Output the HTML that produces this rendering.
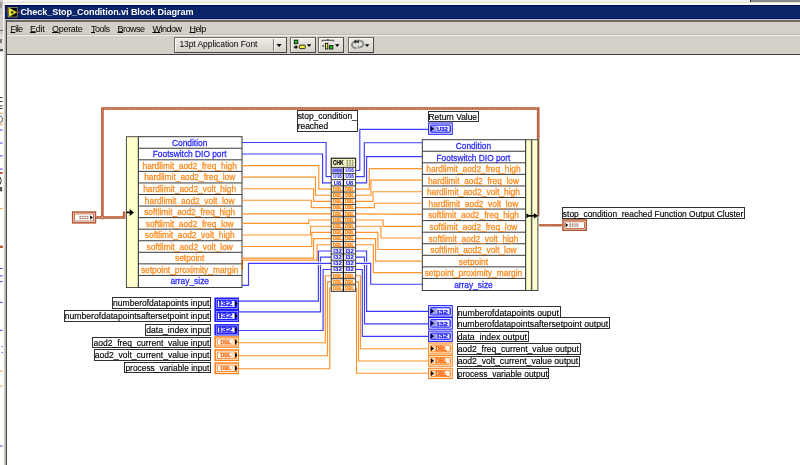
<!DOCTYPE html>
<html lang="en">
<head>
<meta charset="utf-8">
<title>Check_Stop_Condition.vi Block Diagram</title>
<style>
html,body{margin:0;padding:0}
body{width:800px;height:465px;overflow:hidden;position:relative;background:#fff;font-family:"Liberation Sans",sans-serif}
.abs{position:absolute}
#behind-top{left:0;top:0;width:800px;height:3px;background:#f4f3ee}
#behind-top-r{left:750px;top:0;width:50px;height:2px;background:#8a8a8a;border-left:1px solid #222}
#behind-left{left:0;top:0;width:3px;height:52px;background:#d0cdc6}
#win{left:3px;top:2px;width:800px;height:470px;background:#d4d0c8}
#win-hi{left:3px;top:2px;width:800px;height:3px;background:linear-gradient(#e2e0da 0,#e2e0da 33%,#fbfaf6 34%)}
#win-hil{left:3px;top:3px;width:1.4px;height:470px;background:#f6f5f0}
#titlebar{left:5.3px;top:5.2px;width:800px;height:13.9px;background:#0a246a;border-top:0.6px solid #000c5c;border-bottom:0.6px solid #000c5c;box-sizing:border-box}
#title{left:20.4px;top:7.2px;font-size:9.1px;line-height:11px;color:#fff;font-weight:bold;letter-spacing:-0.091px;white-space:nowrap}
#under-title{left:5.4px;top:20px;width:800px;height:1.6px;background:#6c6a66}
#under-title-l{left:5.4px;top:19.1px;width:800px;height:0.9px;background:#c4c4cc}
#menubar{left:5.4px;top:21.6px;width:800px;height:13.2px;background:#d4d0c8}
.mi{position:absolute;top:2.2px;font-size:9.0px;line-height:11px;color:#000;white-space:nowrap}
.mi u{text-decoration:underline;text-underline-offset:0.4px;text-decoration-thickness:0.8px}
#sep1{left:5.4px;top:34px;width:800px;height:0.9px;background:#bebab2}
#sep2{left:5.4px;top:34.9px;width:800px;height:1.5px;background:#f2f0ec}
#toolbar{left:5.4px;top:36.4px;width:800px;height:17.3px;background:#d4d0c8}
#tb-bottom{left:5.4px;top:53.7px;width:800px;height:1.1px;background:#3c3c3c}
#canvas{left:6.9px;top:54.8px;width:800px;height:420px;background:#fff}
#canvas-l{left:5.6px;top:20px;width:1.4px;height:450px;background:#4a4a4a}
#frame-l{left:4.2px;top:20px;width:1.5px;height:450px;background:linear-gradient(90deg,#dedbd4,#a8a6a0)}
.btn{position:absolute;top:0.8px;height:15.6px;background:linear-gradient(#eeece7,#d6d2ca);box-sizing:border-box;border:1px solid;border-color:#6e6c68 #4c4a46 #444240 #6e6c68;box-shadow:inset 0.9px 0.9px 0 #fbfaf7}
#combo-text{position:absolute;left:4.3px;top:0.5px;font-size:8.5px;line-height:10px;white-space:nowrap;letter-spacing:-0.066px}
#chrome{left:0;top:0;width:800px;height:465px;overflow:hidden;filter:blur(0.3px)}
svg{position:absolute;left:0;top:0;filter:blur(0.3px)}
svg text{font-family:"Liberation Sans",sans-serif;white-space:pre}
.dd{position:absolute;top:6.6px;width:0;height:0;border-left:2.3px solid transparent;border-right:2.3px solid transparent;border-top:2.6px solid #000}
</style>
</head>
<body>
<div id="chrome" class="abs">
<div id="win" class="abs"></div>
<div id="behind-top" class="abs"></div>
<div id="behind-top-r" class="abs"></div>
<div id="win-hi" class="abs"></div>
<div id="behind-left" class="abs"><i style="position:absolute;left:0;top:2px;width:2.4px;height:6px;background:#9e9e9e"></i><i style="position:absolute;left:0;top:8px;width:2.4px;height:6px;background:#c4c4c4"></i><i style="position:absolute;left:0;top:29.5px;width:2.6px;height:1px;background:#666"></i><i style="position:absolute;left:0;top:34.5px;width:2.6px;height:14px;background:#e2e0da"></i><i style="position:absolute;left:0;top:38.5px;width:1.6px;height:4.5px;background:#777"></i><i style="position:absolute;left:0;top:49.4px;width:2.6px;height:1.8px;background:#555"></i></div>
<div id="win-hil" class="abs"></div>
<div id="titlebar" class="abs"></div>
<div id="title" class="abs">Check_Stop_Condition.vi Block Diagram</div>
<div id="under-title-l" class="abs"></div>
<div id="under-title" class="abs"></div>
<div id="menubar" class="abs"><span class="mi" style="left:5.1px;letter-spacing:-0.625px"><u>F</u>ile</span><span class="mi" style="left:24.6px;letter-spacing:-0.277px"><u>E</u>dit</span><span class="mi" style="left:46.6px;letter-spacing:-0.288px"><u>O</u>perate</span><span class="mi" style="left:85.6px;letter-spacing:-0.502px"><u>T</u>ools</span><span class="mi" style="left:112.2px;letter-spacing:-0.502px"><u>B</u>rowse</span><span class="mi" style="left:147.0px;letter-spacing:-0.485px"><u>W</u>indow</span><span class="mi" style="left:184.2px;letter-spacing:-0.652px"><u>H</u>elp</span></div>
<div id="sep1" class="abs"></div>
<div id="sep2" class="abs"></div>
<div id="toolbar" class="abs">
  <div class="btn" style="left:168.7px;width:113.4px"><span id="combo-text">13pt Application Font</span>
    <i style="position:absolute;left:98.3px;top:1.2px;width:1px;height:11.6px;background:#7a7873"></i>
    <i style="position:absolute;left:99.3px;top:1.2px;width:1px;height:11.6px;background:#faf9f6"></i></div>
  <div class="btn" style="left:285.0px;width:25.3px"></div>
  <div class="btn" style="left:313.1px;width:25.3px"></div>
  <div class="btn" style="left:342.5px;width:25.9px"></div>
</div>
<div id="tb-bottom" class="abs"></div>
<div id="frame-l" class="abs"></div>
<div id="canvas" class="abs"></div>
<div id="canvas-l" class="abs"></div>
</div>
<svg width="800" height="465" viewBox="0 0 800 465">

<g id="lv-icon">
<rect x="7" y="6.6" width="11.2" height="11.2" fill="#000"/>
<rect x="8" y="7.4" width="9.3" height="9.6" fill="none" stroke="#8c8c78" stroke-width="0.9"/>
<path d="M8.9 7.8L16.6 12.3L8.9 16.8Z" fill="#f4f43c" stroke="#c8c820" stroke-width="0.5"/>
<path d="M10.4 12.3h3.4M12.1 10.9v2.8" stroke="#2a2a00" stroke-width="1.1"/>
<rect x="6.7" y="9.6" width="1.6" height="1.4" fill="#e02020"/><rect x="6.9" y="14.2" width="1.4" height="1.4" fill="#2828d8"/>
<rect x="17.6" y="11.6" width="1.7" height="1.5" fill="#e02020"/>
</g>
<g id="tb-icons">
<rect x="294.3" y="40.1" width="3.5" height="3.6" fill="#18d018" stroke="#000" stroke-width="0.8"/>
<path d="M294.1 46.5h1.7v-1.3l1.9 1.9l-1.9 1.9v-1.3h-1.7z" fill="#000" stroke="#000" stroke-width="0.3"/>
<rect x="299.4" y="45.1" width="5.9" height="3.5" rx="0.9" fill="#f0f040" stroke="#000" stroke-width="0.8"/>
<path d="M322 41.6v-1.3h5.9v-1.2v1.2h5.8v1.3" stroke="#222" stroke-width="0.8" fill="none"/>
<rect x="322.5" y="45.3" width="1.3" height="1.3" fill="#000"/>
<rect x="325.5" y="43.3" width="2.3" height="5.7" fill="#f0f040" stroke="#000" stroke-width="0.8"/>
<rect x="329.4" y="45.6" width="3.5" height="3.4" fill="#18d018" stroke="#000" stroke-width="0.8"/>
<path d="M356.6 47.9C352.2 48.6 350.9 44.6 353 42.6C354.2 41.4 356 41.3 357.6 41.8" stroke="#8e8e8e" stroke-width="1.9" fill="none"/>
<path d="M358.6 40.9C363 40.2 364.6 44.2 362.4 46.3C361.2 47.4 359.4 47.5 357.9 47.1" stroke="#8e8e8e" stroke-width="1.9" fill="none"/>
<path d="M353.6 41.6l2.4-2.4v1.6h1.2l1.6-1.6v4.6l-1.6-1.6h-1.2v1.6z" fill="#2a2a2a"/>
<path d="M359.6 47.2l-2.2 2v-4z" fill="#a8a8a8"/>
<path d="M276.6 44.1h5l-2.5 2.9z M306.9 44.3h4.4l-2.2 2.7z M335 44.3h4.4l-2.2 2.7z M364.9 44.3h4.4l-2.2 2.7z" fill="#000"/>
</g>

<rect x="0" y="97.2" width="2.6" height="0.9" fill="#222"/>
<rect x="0" y="101.1" width="2.6" height="0.9" fill="#222"/>
<rect x="0" y="105.5" width="2.6" height="0.9" fill="#222"/>
<rect x="0" y="108.0" width="2.6" height="0.9" fill="#222"/>
<rect x="0" y="112.8" width="2.6" height="0.9" fill="#ff8c1c"/>
<rect x="0" y="124.3" width="2.6" height="0.9" fill="#ff8c1c"/>
<rect x="0" y="129.6" width="2.6" height="0.9" fill="#3030ff"/>
<rect x="0" y="142.6" width="2.6" height="0.9" fill="#3030ff"/>
<rect x="0" y="155.4" width="2.6" height="0.9" fill="#3030ff"/>
<rect x="0" y="168.6" width="2.6" height="0.9" fill="#3030ff"/>
<rect x="0" y="208.2" width="2.6" height="0.9" fill="#ff8c1c"/>
<rect x="0" y="268.1" width="2.6" height="0.9" fill="#3030ff"/>
<rect x="0" y="275.4" width="2.6" height="0.9" fill="#3030ff"/>
<rect x="0" y="281.2" width="2.6" height="0.9" fill="#3030ff"/>
<rect x="0" y="301.9" width="2.6" height="0.9" fill="#3030ff"/>
<rect x="0" y="329.8" width="2.6" height="0.9" fill="#3030ff"/>
<rect x="0" y="370.6" width="2.6" height="0.9" fill="#ff8c1c"/>
<rect x="0" y="385.6" width="2.6" height="0.9" fill="#ff8c1c"/>
<rect x="0" y="445.6" width="2.6" height="0.9" fill="#3030ff"/>
<rect x="0" y="172" width="2.7" height="1.9" fill="#b4552f"/>
<rect x="0" y="245.6" width="2.8" height="2.4" fill="#b4552f"/>
<ellipse cx="0.3" cy="119.4" rx="2.1" ry="3.3" fill="none" stroke="#444" stroke-width="0.9"/>
<path d="M0 176.8Q2.6 180.5 0 184.6" fill="none" stroke="#333" stroke-width="1"/>
<rect x="0" y="187" width="2.2" height="4.4" fill="#555"/>
<rect x="1.8" y="346" width="1" height="1" fill="#3030ff"/><rect x="1.8" y="352" width="1" height="1" fill="#3030ff"/>
<polyline points="102.40,217.50 102.40,108.50 538.20,108.50 538.20,139.60" fill="none" stroke="#b4552f" stroke-width="2.6" stroke-linejoin="miter"/>
<polyline points="102.40,217.50 102.40,108.50 538.20,108.50 538.20,139.60" fill="none" stroke="#e3a48c" stroke-width="0.83" stroke-dasharray="1.2 1.2"/>
<line x1="538.1" y1="139.6" x2="538.1" y2="216.3" stroke="#3c0c00" stroke-width="1.1"/>
<line x1="539.0" y1="139.6" x2="539.0" y2="216.3" stroke="#c4602f" stroke-width="0.8"/>
<polyline points="96.00,217.50 124.10,217.50 124.10,211.40" fill="none" stroke="#b4552f" stroke-width="2.4" stroke-linejoin="miter"/>
<polyline points="96.00,217.50 124.10,217.50 124.10,211.40" fill="none" stroke="#e3a48c" stroke-width="0.77" stroke-dasharray="1.2 1.2"/>
<circle cx="102.4" cy="217.5" r="2.0" fill="#b4552f"/><circle cx="102.4" cy="217.5" r="0.9" fill="#f3d5c8"/>
<polyline points="538.90,225.30 562.40,225.30" fill="none" stroke="#b4552f" stroke-width="2.3" stroke-linejoin="miter"/>
<polyline points="538.90,225.30 562.40,225.30" fill="none" stroke="#e3a48c" stroke-width="0.74" stroke-dasharray="1.2 1.2"/>
<rect x="72.65" y="212.05" width="22.80" height="10.80" fill="#fff" stroke="#b4552f" stroke-width="1.5"/>
<rect x="74.50" y="213.90" width="19.10" height="7.10" fill="#fff" stroke="#b4552f" stroke-width="0.8"/>
<path d="M90.20 215.25 L92.80 217.45 L90.20 219.65Z" fill="#000"/>
<rect x="79.40" y="215.85" width="9" height="3.2" fill="#8a4a36" opacity="0.75"/>
<path d="M81.60 215.65v3.6M83.90 215.65v3.6M86.20 215.65v3.6M79.40 217.45h9" stroke="#fff" stroke-width="0.7" fill="none"/>
<rect x="562.95" y="219.95" width="23.30" height="10.30" fill="#fff" stroke="#b4552f" stroke-width="1.5"/>
<rect x="564.80" y="221.80" width="19.60" height="6.60" fill="#fff" stroke="#b4552f" stroke-width="0.8"/>
<path d="M565.60 222.90 L568.20 225.10 L565.60 227.30Z" fill="#000"/>
<rect x="569.20" y="223.50" width="9" height="3.2" fill="#8a4a36" opacity="0.75"/>
<path d="M571.40 223.30v3.6M573.70 223.30v3.6M576.00 223.30v3.6M569.20 225.10h9" stroke="#fff" stroke-width="0.7" fill="none"/>
<rect x="126.4" y="136.70" width="12.0" height="150.78" fill="#ffffcc" stroke="#4a4a4a" stroke-width="1"/>
<rect x="138.40" y="136.70" width="103.60" height="150.78" fill="#fff" stroke="#3a3a3a" stroke-width="1"/>
<line x1="138.40" y1="148.26" x2="242.00" y2="148.26" stroke="#3a3a3a" stroke-width="1"/>
<line x1="138.40" y1="159.82" x2="242.00" y2="159.82" stroke="#3a3a3a" stroke-width="1"/>
<line x1="138.40" y1="171.38" x2="242.00" y2="171.38" stroke="#3a3a3a" stroke-width="1"/>
<line x1="138.40" y1="182.94" x2="242.00" y2="182.94" stroke="#3a3a3a" stroke-width="1"/>
<line x1="138.40" y1="194.50" x2="242.00" y2="194.50" stroke="#3a3a3a" stroke-width="1"/>
<line x1="138.40" y1="206.06" x2="242.00" y2="206.06" stroke="#3a3a3a" stroke-width="1"/>
<line x1="138.40" y1="217.62" x2="242.00" y2="217.62" stroke="#3a3a3a" stroke-width="1"/>
<line x1="138.40" y1="229.18" x2="242.00" y2="229.18" stroke="#3a3a3a" stroke-width="1"/>
<line x1="138.40" y1="240.74" x2="242.00" y2="240.74" stroke="#3a3a3a" stroke-width="1"/>
<line x1="138.40" y1="252.30" x2="242.00" y2="252.30" stroke="#3a3a3a" stroke-width="1"/>
<line x1="138.40" y1="263.86" x2="242.00" y2="263.86" stroke="#3a3a3a" stroke-width="1"/>
<line x1="138.40" y1="275.42" x2="242.00" y2="275.42" stroke="#3a3a3a" stroke-width="1"/>
<text x="172.04" y="145.75" fill="#2a2aff" stroke="#2a2aff" stroke-width="0.28" font-size="9.2" text-anchor="start" textLength="35.32" lengthAdjust="spacingAndGlyphs">Condition</text>
<text x="152.77" y="157.31" fill="#2a2aff" stroke="#2a2aff" stroke-width="0.28" font-size="9.2" text-anchor="start" textLength="73.86" lengthAdjust="spacingAndGlyphs">Footswitch DIO port</text>
<text x="142.53" y="168.87" fill="#ff8a1c" stroke="#ff8a1c" stroke-width="0.28" font-size="9.2" text-anchor="start" textLength="94.34" lengthAdjust="spacingAndGlyphs">hardlimit_aod2_freq_high</text>
<text x="144.16" y="180.43" fill="#ff8a1c" stroke="#ff8a1c" stroke-width="0.28" font-size="9.2" text-anchor="start" textLength="91.08" lengthAdjust="spacingAndGlyphs">hardlimit_aod2_freq_low</text>
<text x="143.23" y="191.99" fill="#ff8a1c" stroke="#ff8a1c" stroke-width="0.28" font-size="9.2" text-anchor="start" textLength="92.94" lengthAdjust="spacingAndGlyphs">hardlimit_aod2_volt_high</text>
<text x="144.86" y="203.55" fill="#ff8a1c" stroke="#ff8a1c" stroke-width="0.28" font-size="9.2" text-anchor="start" textLength="89.68" lengthAdjust="spacingAndGlyphs">hardlimit_aod2_volt_low</text>
<text x="144.16" y="215.11" fill="#ff8a1c" stroke="#ff8a1c" stroke-width="0.28" font-size="9.2" text-anchor="start" textLength="91.08" lengthAdjust="spacingAndGlyphs">softlimit_aod2_freq_high</text>
<text x="145.79" y="226.67" fill="#ff8a1c" stroke="#ff8a1c" stroke-width="0.28" font-size="9.2" text-anchor="start" textLength="87.82" lengthAdjust="spacingAndGlyphs">softlimit_aod2_freq_low</text>
<text x="144.86" y="238.23" fill="#ff8a1c" stroke="#ff8a1c" stroke-width="0.28" font-size="9.2" text-anchor="start" textLength="89.69" lengthAdjust="spacingAndGlyphs">softlimit_aod2_volt_high</text>
<text x="146.49" y="249.79" fill="#ff8a1c" stroke="#ff8a1c" stroke-width="0.28" font-size="9.2" text-anchor="start" textLength="86.43" lengthAdjust="spacingAndGlyphs">softlimit_aod2_volt_low</text>
<text x="175.06" y="261.35" fill="#ff8a1c" stroke="#ff8a1c" stroke-width="0.28" font-size="9.2" text-anchor="start" textLength="29.28" lengthAdjust="spacingAndGlyphs">setpoint</text>
<text x="140.91" y="272.91" fill="#ff8a1c" stroke="#ff8a1c" stroke-width="0.28" font-size="9.2" text-anchor="start" textLength="97.57" lengthAdjust="spacingAndGlyphs">setpoint_proximity_margin</text>
<text x="170.42" y="284.47" fill="#2a2aff" stroke="#2a2aff" stroke-width="0.28" font-size="9.2" text-anchor="start" textLength="38.56" lengthAdjust="spacingAndGlyphs">array_size</text>
<path d="M126.4 212.4H131" stroke="#000" stroke-width="1.7"/><path d="M129.6 208.9L134.1 212.4L129.6 215.9Z" fill="#000"/>
<rect x="525.60" y="139.70" width="12.3" height="150.78" fill="#ffffcc" stroke="#4a4a4a" stroke-width="1"/>
<line x1="531.6" y1="139.70" x2="531.6" y2="290.48" stroke="#5a5a5a" stroke-width="1.5"/>
<rect x="422.30" y="139.70" width="103.30" height="150.78" fill="#fff" stroke="#3a3a3a" stroke-width="1"/>
<line x1="422.30" y1="151.26" x2="525.60" y2="151.26" stroke="#3a3a3a" stroke-width="1"/>
<line x1="422.30" y1="162.82" x2="525.60" y2="162.82" stroke="#3a3a3a" stroke-width="1"/>
<line x1="422.30" y1="174.38" x2="525.60" y2="174.38" stroke="#3a3a3a" stroke-width="1"/>
<line x1="422.30" y1="185.94" x2="525.60" y2="185.94" stroke="#3a3a3a" stroke-width="1"/>
<line x1="422.30" y1="197.50" x2="525.60" y2="197.50" stroke="#3a3a3a" stroke-width="1"/>
<line x1="422.30" y1="209.06" x2="525.60" y2="209.06" stroke="#3a3a3a" stroke-width="1"/>
<line x1="422.30" y1="220.62" x2="525.60" y2="220.62" stroke="#3a3a3a" stroke-width="1"/>
<line x1="422.30" y1="232.18" x2="525.60" y2="232.18" stroke="#3a3a3a" stroke-width="1"/>
<line x1="422.30" y1="243.74" x2="525.60" y2="243.74" stroke="#3a3a3a" stroke-width="1"/>
<line x1="422.30" y1="255.30" x2="525.60" y2="255.30" stroke="#3a3a3a" stroke-width="1"/>
<line x1="422.30" y1="266.86" x2="525.60" y2="266.86" stroke="#3a3a3a" stroke-width="1"/>
<line x1="422.30" y1="278.42" x2="525.60" y2="278.42" stroke="#3a3a3a" stroke-width="1"/>
<text x="455.79" y="149.10" fill="#2a2aff" stroke="#2a2aff" stroke-width="0.28" font-size="9.2" text-anchor="start" textLength="35.32" lengthAdjust="spacingAndGlyphs">Condition</text>
<text x="436.52" y="160.66" fill="#2a2aff" stroke="#2a2aff" stroke-width="0.28" font-size="9.2" text-anchor="start" textLength="73.86" lengthAdjust="spacingAndGlyphs">Footswitch DIO port</text>
<text x="426.28" y="172.22" fill="#ff8a1c" stroke="#ff8a1c" stroke-width="0.28" font-size="9.2" text-anchor="start" textLength="94.34" lengthAdjust="spacingAndGlyphs">hardlimit_aod2_freq_high</text>
<text x="427.91" y="183.78" fill="#ff8a1c" stroke="#ff8a1c" stroke-width="0.28" font-size="9.2" text-anchor="start" textLength="91.08" lengthAdjust="spacingAndGlyphs">hardlimit_aod2_freq_low</text>
<text x="426.98" y="195.34" fill="#ff8a1c" stroke="#ff8a1c" stroke-width="0.28" font-size="9.2" text-anchor="start" textLength="92.94" lengthAdjust="spacingAndGlyphs">hardlimit_aod2_volt_high</text>
<text x="428.61" y="206.90" fill="#ff8a1c" stroke="#ff8a1c" stroke-width="0.28" font-size="9.2" text-anchor="start" textLength="89.68" lengthAdjust="spacingAndGlyphs">hardlimit_aod2_volt_low</text>
<text x="427.91" y="218.46" fill="#ff8a1c" stroke="#ff8a1c" stroke-width="0.28" font-size="9.2" text-anchor="start" textLength="91.08" lengthAdjust="spacingAndGlyphs">softlimit_aod2_freq_high</text>
<text x="429.54" y="230.02" fill="#ff8a1c" stroke="#ff8a1c" stroke-width="0.28" font-size="9.2" text-anchor="start" textLength="87.82" lengthAdjust="spacingAndGlyphs">softlimit_aod2_freq_low</text>
<text x="428.61" y="241.58" fill="#ff8a1c" stroke="#ff8a1c" stroke-width="0.28" font-size="9.2" text-anchor="start" textLength="89.69" lengthAdjust="spacingAndGlyphs">softlimit_aod2_volt_high</text>
<text x="430.24" y="253.14" fill="#ff8a1c" stroke="#ff8a1c" stroke-width="0.28" font-size="9.2" text-anchor="start" textLength="86.43" lengthAdjust="spacingAndGlyphs">softlimit_aod2_volt_low</text>
<text x="458.81" y="264.70" fill="#ff8a1c" stroke="#ff8a1c" stroke-width="0.28" font-size="9.2" text-anchor="start" textLength="29.28" lengthAdjust="spacingAndGlyphs">setpoint</text>
<text x="424.66" y="276.26" fill="#ff8a1c" stroke="#ff8a1c" stroke-width="0.28" font-size="9.2" text-anchor="start" textLength="97.57" lengthAdjust="spacingAndGlyphs">setpoint_proximity_margin</text>
<text x="454.17" y="287.82" fill="#2a2aff" stroke="#2a2aff" stroke-width="0.28" font-size="9.2" text-anchor="start" textLength="38.56" lengthAdjust="spacingAndGlyphs">array_size</text>
<path d="M527 215.8H537" stroke="#000" stroke-width="1.7"/><path d="M533.9 212.9L537.9 215.8L533.9 218.7Z" fill="#000"/><path d="M526.4 213.4L530 215.8L526.4 218.2Z" fill="#000"/>
<polyline points="242.00,142.48 326.10,142.48 326.10,176.69 331.30,176.69" fill="none" stroke="#3c3cff" stroke-width="1.15"/>
<polyline points="242.00,154.04 322.60,154.04 322.60,182.88 331.30,182.88" fill="none" stroke="#3c3cff" stroke-width="1.15"/>
<polyline points="242.00,165.60 318.80,165.60 318.80,189.06 331.30,189.06" fill="none" stroke="#ff922c" stroke-width="1.15"/>
<polyline points="242.00,177.16 315.50,177.16 315.50,195.25 331.30,195.25" fill="none" stroke="#ff922c" stroke-width="1.15"/>
<polyline points="242.00,188.72 313.60,188.72 313.60,201.44 331.30,201.44" fill="none" stroke="#ff922c" stroke-width="1.15"/>
<polyline points="242.00,200.28 311.30,200.28 311.30,207.63 331.30,207.63" fill="none" stroke="#ff922c" stroke-width="1.15"/>
<polyline points="242.00,223.40 308.70,223.40 308.70,220.01 331.30,220.01" fill="none" stroke="#ff922c" stroke-width="1.15"/>
<polyline points="242.00,234.96 310.50,234.96 310.50,226.20 331.30,226.20" fill="none" stroke="#ff922c" stroke-width="1.15"/>
<polyline points="242.00,246.52 311.80,246.52 311.80,232.39 331.30,232.39" fill="none" stroke="#ff922c" stroke-width="1.15"/>
<polyline points="242.00,258.08 313.60,258.08 313.60,238.58 331.30,238.58" fill="none" stroke="#ff922c" stroke-width="1.15"/>
<polyline points="242.00,213.82 331.30,213.82" fill="none" stroke="#ff922c" stroke-width="1.3"/>
<polyline points="242.40,269.64 242.40,260.10 317.00,260.10 317.00,244.78 331.30,244.78" fill="none" stroke="#ff922c" stroke-width="1.15"/>
<line x1="242.40" y1="260.1" x2="242.40" y2="269.64" stroke="#c85a00" stroke-width="1.2"/>
<polyline points="242.00,285.40 248.50,285.40 248.50,263.35 331.30,263.35" fill="none" stroke="#3c3cff" stroke-width="1.15"/>
<polyline points="239.00,301.10 318.40,301.10 318.40,250.97 331.30,250.97" fill="none" stroke="#3c3cff" stroke-width="1.15"/>
<polyline points="239.00,311.90 320.50,311.90 320.50,257.15 331.30,257.15" fill="none" stroke="#3c3cff" stroke-width="1.15"/>
<polyline points="239.00,330.50 323.10,330.50 323.10,269.53 331.30,269.53" fill="none" stroke="#3c3cff" stroke-width="1.15"/>
<polyline points="239.00,342.70 325.30,342.70 325.30,275.73 331.30,275.73" fill="none" stroke="#ff922c" stroke-width="1.15"/>
<polyline points="239.00,355.70 327.50,355.70 327.50,281.91 331.30,281.91" fill="none" stroke="#ff922c" stroke-width="1.15"/>
<polyline points="239.00,368.70 329.80,368.70 329.80,288.11 331.30,288.11" fill="none" stroke="#ff922c" stroke-width="1.15"/>
<rect x="317.60" y="261.75" width="1.6" height="1.0" fill="#fff"/>
<rect x="317.60" y="263.95" width="1.6" height="1.0" fill="#fff"/>
<rect x="319.70" y="261.75" width="1.6" height="1.0" fill="#fff"/>
<rect x="319.70" y="263.95" width="1.6" height="1.0" fill="#fff"/>
<polyline points="355.60,170.50 359.80,170.50 359.80,129.30 428.30,129.30" fill="none" stroke="#3c3cff" stroke-width="1.15"/>
<polyline points="355.60,176.69 364.30,176.69 364.30,142.70 422.30,142.70" fill="none" stroke="#3c3cff" stroke-width="1.15"/>
<polyline points="355.60,182.88 366.60,182.88 366.60,156.60 422.30,156.60" fill="none" stroke="#3c3cff" stroke-width="1.15"/>
<polyline points="355.60,189.06 369.30,189.06 369.30,168.60 422.30,168.60" fill="none" stroke="#ff922c" stroke-width="1.15"/>
<polyline points="355.60,195.25 370.90,195.25 370.90,180.16 422.30,180.16" fill="none" stroke="#ff922c" stroke-width="1.15"/>
<polyline points="355.60,201.44 373.00,201.44 373.00,191.72 422.30,191.72" fill="none" stroke="#ff922c" stroke-width="1.15"/>
<polyline points="355.60,207.63 374.40,207.63 374.40,203.28 422.30,203.28" fill="none" stroke="#ff922c" stroke-width="1.15"/>
<polyline points="355.60,220.01 383.10,220.01 383.10,226.40 422.30,226.40" fill="none" stroke="#ff922c" stroke-width="1.15"/>
<polyline points="355.60,226.20 380.90,226.20 380.90,237.96 422.30,237.96" fill="none" stroke="#ff922c" stroke-width="1.15"/>
<polyline points="355.60,232.39 377.90,232.39 377.90,249.52 422.30,249.52" fill="none" stroke="#ff922c" stroke-width="1.15"/>
<polyline points="355.60,238.58 375.60,238.58 375.60,261.08 422.30,261.08" fill="none" stroke="#ff922c" stroke-width="1.15"/>
<polyline points="355.60,244.78 373.30,244.78 373.30,272.64 422.30,272.64" fill="none" stroke="#ff922c" stroke-width="1.15"/>
<polyline points="355.60,263.35 370.70,263.35 370.70,284.20 422.30,284.20" fill="none" stroke="#3c3cff" stroke-width="1.15"/>
<polyline points="355.60,213.82 422.30,214.42" fill="none" stroke="#ff922c" stroke-width="1.2"/>
<polyline points="355.60,250.97 366.60,250.97 366.60,311.40 428.10,311.40" fill="none" stroke="#3c3cff" stroke-width="1.15"/>
<polyline points="355.60,257.15 364.50,257.15 364.50,323.80 428.10,323.80" fill="none" stroke="#3c3cff" stroke-width="1.15"/>
<polyline points="355.60,269.53 362.30,269.53 362.30,336.30 428.10,336.30" fill="none" stroke="#3c3cff" stroke-width="1.15"/>
<polyline points="355.60,275.73 360.40,275.73 360.40,348.70 428.10,348.70" fill="none" stroke="#ff922c" stroke-width="1.15"/>
<polyline points="355.60,281.91 358.50,281.91 358.50,361.00 428.10,361.00" fill="none" stroke="#ff922c" stroke-width="1.15"/>
<polyline points="355.60,288.11 356.50,288.11 356.50,373.20 428.10,373.20" fill="none" stroke="#ff922c" stroke-width="1.15"/>
<rect x="365.80" y="261.75" width="1.6" height="1.0" fill="#fff"/>
<rect x="365.80" y="263.95" width="1.6" height="1.0" fill="#fff"/>
<rect x="363.70" y="261.75" width="1.6" height="1.0" fill="#fff"/>
<rect x="363.70" y="263.95" width="1.6" height="1.0" fill="#fff"/>
<rect x="331.30" y="158.30" width="24.30" height="132.90" fill="#fff" stroke="#222" stroke-width="1"/>
<rect x="331.30" y="158.30" width="24.30" height="9.10" fill="#f2f2c4" stroke="#222" stroke-width="1"/>
<text x="332.90" y="165.40" fill="#000" stroke="#000" stroke-width="0.22" font-size="7" text-anchor="start" font-weight="bold" textLength="10.50" lengthAdjust="spacingAndGlyphs">CHK</text>
<rect x="346.60" y="160.30" width="1.5" height="1.2" fill="#6b6b4a"/>
<rect x="346.60" y="162.50" width="1.5" height="1.2" fill="#6b6b4a"/>
<rect x="346.60" y="164.70" width="1.5" height="1.2" fill="#6b6b4a"/>
<rect x="349.20" y="160.30" width="1.5" height="1.2" fill="#6b6b4a"/>
<rect x="349.20" y="162.50" width="1.5" height="1.2" fill="#6b6b4a"/>
<rect x="349.20" y="164.70" width="1.5" height="1.2" fill="#6b6b4a"/>
<rect x="351.80" y="160.30" width="1.5" height="1.2" fill="#6b6b4a"/>
<rect x="351.80" y="162.50" width="1.5" height="1.2" fill="#6b6b4a"/>
<rect x="351.80" y="164.70" width="1.5" height="1.2" fill="#6b6b4a"/>
<rect x="331.30" y="167.40" width="24.30" height="6.19" fill="#fff" stroke="#343434" stroke-width="0.75"/>
<rect x="332.30" y="168.40" width="10.10" height="4.19" fill="#6a6ade"/>
<text x="345.45" y="172.29" fill="#2020f0" stroke="#2020f0" stroke-width="0.08" font-size="5.0" text-anchor="start" font-weight="bold" textLength="8.40" lengthAdjust="spacingAndGlyphs">U16</text>
<rect x="331.30" y="173.59" width="24.30" height="6.19" fill="#fff" stroke="#343434" stroke-width="0.75"/>
<text x="333.35" y="178.48" fill="#2020f0" stroke="#2020f0" stroke-width="0.08" font-size="5.0" text-anchor="start" font-weight="bold" textLength="8.40" lengthAdjust="spacingAndGlyphs">U16</text>
<text x="345.45" y="178.48" fill="#2020f0" stroke="#2020f0" stroke-width="0.08" font-size="5.0" text-anchor="start" font-weight="bold" textLength="8.40" lengthAdjust="spacingAndGlyphs">U16</text>
<rect x="331.30" y="179.78" width="24.30" height="6.19" fill="#fff" stroke="#343434" stroke-width="0.75"/>
<text x="333.85" y="184.67" fill="#2020f0" stroke="#2020f0" stroke-width="0.08" font-size="5.0" text-anchor="start" font-weight="bold" textLength="7.40" lengthAdjust="spacingAndGlyphs">U8</text>
<text x="345.95" y="184.67" fill="#2020f0" stroke="#2020f0" stroke-width="0.08" font-size="5.0" text-anchor="start" font-weight="bold" textLength="7.40" lengthAdjust="spacingAndGlyphs">U8</text>
<rect x="331.30" y="185.97" width="24.30" height="6.19" fill="#fffaf3" stroke="#343434" stroke-width="0.75"/>
<text x="332.85" y="190.86" fill="#ff8208" stroke="#ff8208" stroke-width="0.3" font-size="5.2" text-anchor="start" font-weight="bold" textLength="9.40" lengthAdjust="spacingAndGlyphs">DBL</text>
<text x="344.95" y="190.86" fill="#ff8208" stroke="#ff8208" stroke-width="0.3" font-size="5.2" text-anchor="start" font-weight="bold" textLength="9.40" lengthAdjust="spacingAndGlyphs">DBL</text>
<rect x="331.30" y="192.16" width="24.30" height="6.19" fill="#fffaf3" stroke="#343434" stroke-width="0.75"/>
<text x="332.85" y="197.05" fill="#ff8208" stroke="#ff8208" stroke-width="0.3" font-size="5.2" text-anchor="start" font-weight="bold" textLength="9.40" lengthAdjust="spacingAndGlyphs">DBL</text>
<text x="344.95" y="197.05" fill="#ff8208" stroke="#ff8208" stroke-width="0.3" font-size="5.2" text-anchor="start" font-weight="bold" textLength="9.40" lengthAdjust="spacingAndGlyphs">DBL</text>
<rect x="331.30" y="198.35" width="24.30" height="6.19" fill="#fffaf3" stroke="#343434" stroke-width="0.75"/>
<text x="332.85" y="203.24" fill="#ff8208" stroke="#ff8208" stroke-width="0.3" font-size="5.2" text-anchor="start" font-weight="bold" textLength="9.40" lengthAdjust="spacingAndGlyphs">DBL</text>
<text x="344.95" y="203.24" fill="#ff8208" stroke="#ff8208" stroke-width="0.3" font-size="5.2" text-anchor="start" font-weight="bold" textLength="9.40" lengthAdjust="spacingAndGlyphs">DBL</text>
<rect x="331.30" y="204.54" width="24.30" height="6.19" fill="#fffaf3" stroke="#343434" stroke-width="0.75"/>
<text x="332.85" y="209.43" fill="#ff8208" stroke="#ff8208" stroke-width="0.3" font-size="5.2" text-anchor="start" font-weight="bold" textLength="9.40" lengthAdjust="spacingAndGlyphs">DBL</text>
<text x="344.95" y="209.43" fill="#ff8208" stroke="#ff8208" stroke-width="0.3" font-size="5.2" text-anchor="start" font-weight="bold" textLength="9.40" lengthAdjust="spacingAndGlyphs">DBL</text>
<rect x="331.30" y="210.73" width="24.30" height="6.19" fill="#fffaf3" stroke="#343434" stroke-width="0.75"/>
<text x="332.85" y="215.62" fill="#ff8208" stroke="#ff8208" stroke-width="0.3" font-size="5.2" text-anchor="start" font-weight="bold" textLength="9.40" lengthAdjust="spacingAndGlyphs">DBL</text>
<text x="344.95" y="215.62" fill="#ff8208" stroke="#ff8208" stroke-width="0.3" font-size="5.2" text-anchor="start" font-weight="bold" textLength="9.40" lengthAdjust="spacingAndGlyphs">DBL</text>
<rect x="331.30" y="216.92" width="24.30" height="6.19" fill="#fffaf3" stroke="#343434" stroke-width="0.75"/>
<text x="332.85" y="221.81" fill="#ff8208" stroke="#ff8208" stroke-width="0.3" font-size="5.2" text-anchor="start" font-weight="bold" textLength="9.40" lengthAdjust="spacingAndGlyphs">DBL</text>
<text x="344.95" y="221.81" fill="#ff8208" stroke="#ff8208" stroke-width="0.3" font-size="5.2" text-anchor="start" font-weight="bold" textLength="9.40" lengthAdjust="spacingAndGlyphs">DBL</text>
<rect x="331.30" y="223.11" width="24.30" height="6.19" fill="#fffaf3" stroke="#343434" stroke-width="0.75"/>
<text x="332.85" y="228.00" fill="#ff8208" stroke="#ff8208" stroke-width="0.3" font-size="5.2" text-anchor="start" font-weight="bold" textLength="9.40" lengthAdjust="spacingAndGlyphs">DBL</text>
<text x="344.95" y="228.00" fill="#ff8208" stroke="#ff8208" stroke-width="0.3" font-size="5.2" text-anchor="start" font-weight="bold" textLength="9.40" lengthAdjust="spacingAndGlyphs">DBL</text>
<rect x="331.30" y="229.30" width="24.30" height="6.19" fill="#fffaf3" stroke="#343434" stroke-width="0.75"/>
<text x="332.85" y="234.19" fill="#ff8208" stroke="#ff8208" stroke-width="0.3" font-size="5.2" text-anchor="start" font-weight="bold" textLength="9.40" lengthAdjust="spacingAndGlyphs">DBL</text>
<text x="344.95" y="234.19" fill="#ff8208" stroke="#ff8208" stroke-width="0.3" font-size="5.2" text-anchor="start" font-weight="bold" textLength="9.40" lengthAdjust="spacingAndGlyphs">DBL</text>
<rect x="331.30" y="235.49" width="24.30" height="6.19" fill="#fffaf3" stroke="#343434" stroke-width="0.75"/>
<text x="332.85" y="240.38" fill="#ff8208" stroke="#ff8208" stroke-width="0.3" font-size="5.2" text-anchor="start" font-weight="bold" textLength="9.40" lengthAdjust="spacingAndGlyphs">DBL</text>
<text x="344.95" y="240.38" fill="#ff8208" stroke="#ff8208" stroke-width="0.3" font-size="5.2" text-anchor="start" font-weight="bold" textLength="9.40" lengthAdjust="spacingAndGlyphs">DBL</text>
<rect x="331.30" y="241.68" width="24.30" height="6.19" fill="#fffaf3" stroke="#343434" stroke-width="0.75"/>
<text x="332.85" y="246.57" fill="#ff8208" stroke="#ff8208" stroke-width="0.3" font-size="5.2" text-anchor="start" font-weight="bold" textLength="9.40" lengthAdjust="spacingAndGlyphs">DBL</text>
<text x="344.95" y="246.57" fill="#ff8208" stroke="#ff8208" stroke-width="0.3" font-size="5.2" text-anchor="start" font-weight="bold" textLength="9.40" lengthAdjust="spacingAndGlyphs">DBL</text>
<rect x="331.30" y="247.87" width="24.30" height="6.19" fill="#fff" stroke="#343434" stroke-width="0.75"/>
<text x="333.35" y="252.76" fill="#2020f0" stroke="#2020f0" stroke-width="0.08" font-size="5.0" text-anchor="start" font-weight="bold" textLength="8.40" lengthAdjust="spacingAndGlyphs">I32</text>
<text x="345.45" y="252.76" fill="#2020f0" stroke="#2020f0" stroke-width="0.08" font-size="5.0" text-anchor="start" font-weight="bold" textLength="8.40" lengthAdjust="spacingAndGlyphs">I32</text>
<rect x="331.30" y="254.06" width="24.30" height="6.19" fill="#fff" stroke="#343434" stroke-width="0.75"/>
<text x="333.35" y="258.95" fill="#2020f0" stroke="#2020f0" stroke-width="0.08" font-size="5.0" text-anchor="start" font-weight="bold" textLength="8.40" lengthAdjust="spacingAndGlyphs">I32</text>
<text x="345.45" y="258.95" fill="#2020f0" stroke="#2020f0" stroke-width="0.08" font-size="5.0" text-anchor="start" font-weight="bold" textLength="8.40" lengthAdjust="spacingAndGlyphs">I32</text>
<rect x="331.30" y="260.25" width="24.30" height="6.19" fill="#fff" stroke="#343434" stroke-width="0.75"/>
<text x="333.35" y="265.14" fill="#2020f0" stroke="#2020f0" stroke-width="0.08" font-size="5.0" text-anchor="start" font-weight="bold" textLength="8.40" lengthAdjust="spacingAndGlyphs">I32</text>
<text x="345.45" y="265.14" fill="#2020f0" stroke="#2020f0" stroke-width="0.08" font-size="5.0" text-anchor="start" font-weight="bold" textLength="8.40" lengthAdjust="spacingAndGlyphs">I32</text>
<rect x="331.30" y="266.44" width="24.30" height="6.19" fill="#fff" stroke="#343434" stroke-width="0.75"/>
<text x="333.35" y="271.33" fill="#2020f0" stroke="#2020f0" stroke-width="0.08" font-size="5.0" text-anchor="start" font-weight="bold" textLength="8.40" lengthAdjust="spacingAndGlyphs">I32</text>
<text x="345.45" y="271.33" fill="#2020f0" stroke="#2020f0" stroke-width="0.08" font-size="5.0" text-anchor="start" font-weight="bold" textLength="8.40" lengthAdjust="spacingAndGlyphs">I32</text>
<rect x="331.30" y="272.63" width="24.30" height="6.19" fill="#fffaf3" stroke="#343434" stroke-width="0.75"/>
<text x="332.85" y="277.52" fill="#ff8208" stroke="#ff8208" stroke-width="0.3" font-size="5.2" text-anchor="start" font-weight="bold" textLength="9.40" lengthAdjust="spacingAndGlyphs">DBL</text>
<text x="344.95" y="277.52" fill="#ff8208" stroke="#ff8208" stroke-width="0.3" font-size="5.2" text-anchor="start" font-weight="bold" textLength="9.40" lengthAdjust="spacingAndGlyphs">DBL</text>
<rect x="331.30" y="278.82" width="24.30" height="6.19" fill="#fffaf3" stroke="#343434" stroke-width="0.75"/>
<text x="332.85" y="283.71" fill="#ff8208" stroke="#ff8208" stroke-width="0.3" font-size="5.2" text-anchor="start" font-weight="bold" textLength="9.40" lengthAdjust="spacingAndGlyphs">DBL</text>
<text x="344.95" y="283.71" fill="#ff8208" stroke="#ff8208" stroke-width="0.3" font-size="5.2" text-anchor="start" font-weight="bold" textLength="9.40" lengthAdjust="spacingAndGlyphs">DBL</text>
<rect x="331.30" y="285.01" width="24.30" height="6.19" fill="#fffaf3" stroke="#343434" stroke-width="0.75"/>
<text x="332.85" y="289.90" fill="#ff8208" stroke="#ff8208" stroke-width="0.3" font-size="5.2" text-anchor="start" font-weight="bold" textLength="9.40" lengthAdjust="spacingAndGlyphs">DBL</text>
<text x="344.95" y="289.90" fill="#ff8208" stroke="#ff8208" stroke-width="0.3" font-size="5.2" text-anchor="start" font-weight="bold" textLength="9.40" lengthAdjust="spacingAndGlyphs">DBL</text>
<line x1="343.40" y1="167.40" x2="343.40" y2="291.2" stroke="#000" stroke-width="1.3"/>
<rect x="214.40" y="297.50" width="24.60" height="12.50" fill="#1c1cff"/>
<rect x="216.25" y="299.30" width="21.60" height="9.40" fill="none" stroke="#d6d6ff" stroke-width="0.55"/>
<rect x="217.90" y="300.90" width="16.60" height="6.00" fill="#fff"/>
<path d="M235.00 301.35L237.60 303.75L235.00 306.15Z" fill="#000"/>
<text x="218.70" y="306.20" fill="#1c1cff" stroke="#1c1cff" stroke-width="0.35" font-size="6.9" text-anchor="start" font-weight="bold" textLength="14.00" lengthAdjust="spacingAndGlyphs">I32</text>
<rect x="214.40" y="309.90" width="24.60" height="12.10" fill="#1c1cff"/>
<rect x="216.25" y="311.70" width="21.60" height="9.00" fill="none" stroke="#d6d6ff" stroke-width="0.55"/>
<rect x="217.90" y="313.30" width="16.60" height="5.60" fill="#fff"/>
<path d="M235.00 313.55L237.60 315.95L235.00 318.35Z" fill="#000"/>
<text x="218.70" y="318.40" fill="#1c1cff" stroke="#1c1cff" stroke-width="0.35" font-size="6.9" text-anchor="start" font-weight="bold" textLength="14.00" lengthAdjust="spacingAndGlyphs">I32</text>
<rect x="214.40" y="324.10" width="24.60" height="11.40" fill="#1c1cff"/>
<rect x="216.25" y="325.90" width="21.60" height="8.30" fill="none" stroke="#d6d6ff" stroke-width="0.55"/>
<rect x="217.90" y="327.50" width="16.60" height="4.90" fill="#fff"/>
<path d="M235.00 327.40L237.60 329.80L235.00 332.20Z" fill="#000"/>
<text x="218.70" y="332.25" fill="#1c1cff" stroke="#1c1cff" stroke-width="0.35" font-size="6.9" text-anchor="start" font-weight="bold" textLength="14.00" lengthAdjust="spacingAndGlyphs">I32</text>
<rect x="214.40" y="336.20" width="24.60" height="11.60" fill="#ff7c12"/>
<rect x="216.40" y="338.15" width="21.20" height="7.90" fill="none" stroke="#fff3e6" stroke-width="1.0"/>
<rect x="217.70" y="339.40" width="16.70" height="5.30" fill="#fff"/>
<rect x="231.60" y="339.40" width="2.8" height="5.30" fill="#ffe4c4"/>
<path d="M235.00 339.60L237.60 342.00L235.00 344.40Z" fill="#000"/>
<text x="220.40" y="344.00" fill="#f4660a" stroke="#f4660a" stroke-width="0.25" font-size="5.6" text-anchor="start" font-weight="bold" textLength="10.80" lengthAdjust="spacingAndGlyphs">DBL</text>
<rect x="214.40" y="349.30" width="24.60" height="11.70" fill="#ff7c12"/>
<rect x="216.40" y="351.25" width="21.20" height="8.00" fill="none" stroke="#fff3e6" stroke-width="1.0"/>
<rect x="217.70" y="352.50" width="16.70" height="5.40" fill="#fff"/>
<rect x="231.60" y="352.50" width="2.8" height="5.40" fill="#ffe4c4"/>
<path d="M235.00 352.75L237.60 355.15L235.00 357.55Z" fill="#000"/>
<text x="220.40" y="357.15" fill="#f4660a" stroke="#f4660a" stroke-width="0.25" font-size="5.6" text-anchor="start" font-weight="bold" textLength="10.80" lengthAdjust="spacingAndGlyphs">DBL</text>
<rect x="214.40" y="362.30" width="24.60" height="11.90" fill="#ff7c12"/>
<rect x="216.40" y="364.25" width="21.20" height="8.20" fill="none" stroke="#fff3e6" stroke-width="1.0"/>
<rect x="217.70" y="365.50" width="16.70" height="5.60" fill="#fff"/>
<rect x="231.60" y="365.50" width="2.8" height="5.60" fill="#ffe4c4"/>
<path d="M235.00 365.85L237.60 368.25L235.00 370.65Z" fill="#000"/>
<text x="220.40" y="370.25" fill="#f4660a" stroke="#f4660a" stroke-width="0.25" font-size="5.6" text-anchor="start" font-weight="bold" textLength="10.80" lengthAdjust="spacingAndGlyphs">DBL</text>
<rect x="428.60" y="305.60" width="23.70" height="11.40" fill="#e2e2ff" stroke="#1c1cff" stroke-width="1"/>
<rect x="430.50" y="307.60" width="19.90" height="7.40" rx="0.9" fill="#9a9aff" stroke="#1c1cff" stroke-width="0.9"/>
<rect x="436.70" y="308.60" width="12.10" height="5.40" fill="#fff"/>
<path d="M431.00 308.80L434.00 311.30L431.00 313.80Z" fill="#000"/>
<text x="437.10" y="313.50" fill="#2020ff" stroke="#2020ff" stroke-width="0.3" font-size="6.2" text-anchor="start" font-weight="bold" textLength="10.80" lengthAdjust="spacingAndGlyphs">I32</text>
<rect x="428.60" y="317.50" width="23.70" height="11.70" fill="#e2e2ff" stroke="#1c1cff" stroke-width="1"/>
<rect x="430.50" y="319.50" width="19.90" height="7.70" rx="0.9" fill="#9a9aff" stroke="#1c1cff" stroke-width="0.9"/>
<rect x="436.70" y="320.50" width="12.10" height="5.70" fill="#fff"/>
<path d="M431.00 320.85L434.00 323.35L431.00 325.85Z" fill="#000"/>
<text x="437.10" y="325.55" fill="#2020ff" stroke="#2020ff" stroke-width="0.3" font-size="6.2" text-anchor="start" font-weight="bold" textLength="10.80" lengthAdjust="spacingAndGlyphs">I32</text>
<rect x="428.60" y="331.10" width="23.70" height="10.30" fill="#e2e2ff" stroke="#1c1cff" stroke-width="1"/>
<rect x="430.50" y="333.10" width="19.90" height="6.30" rx="0.9" fill="#9a9aff" stroke="#1c1cff" stroke-width="0.9"/>
<rect x="436.70" y="334.10" width="12.10" height="4.30" fill="#fff"/>
<path d="M431.00 333.75L434.00 336.25L431.00 338.75Z" fill="#000"/>
<text x="437.10" y="338.45" fill="#2020ff" stroke="#2020ff" stroke-width="0.3" font-size="6.2" text-anchor="start" font-weight="bold" textLength="10.80" lengthAdjust="spacingAndGlyphs">I32</text>
<rect x="428.60" y="343.00" width="23.70" height="10.90" fill="#fff4e2" stroke="#ff7c12" stroke-width="1"/>
<rect x="430.50" y="345.00" width="19.90" height="6.90" rx="0.9" fill="#ffdcb8" stroke="#ff7c12" stroke-width="0.9"/>
<rect x="446.50" y="346.00" width="2.50" height="4.90" fill="#fff8f0"/>
<path d="M431.00 345.95L434.00 348.45L431.00 350.95Z" fill="#000"/>
<text x="435.40" y="350.75" fill="#ff6206" stroke="#ff6206" stroke-width="0.3" font-size="6.4" text-anchor="start" font-weight="bold" textLength="11.20" lengthAdjust="spacingAndGlyphs">DBL</text>
<rect x="428.60" y="355.40" width="23.70" height="10.80" fill="#fff4e2" stroke="#ff7c12" stroke-width="1"/>
<rect x="430.50" y="357.40" width="19.90" height="6.80" rx="0.9" fill="#ffdcb8" stroke="#ff7c12" stroke-width="0.9"/>
<rect x="446.50" y="358.40" width="2.50" height="4.80" fill="#fff8f0"/>
<path d="M431.00 358.30L434.00 360.80L431.00 363.30Z" fill="#000"/>
<text x="435.40" y="363.10" fill="#ff6206" stroke="#ff6206" stroke-width="0.3" font-size="6.4" text-anchor="start" font-weight="bold" textLength="11.20" lengthAdjust="spacingAndGlyphs">DBL</text>
<rect x="428.60" y="368.30" width="23.70" height="10.30" fill="#fff4e2" stroke="#ff7c12" stroke-width="1"/>
<rect x="430.50" y="370.30" width="19.90" height="6.30" rx="0.9" fill="#ffdcb8" stroke="#ff7c12" stroke-width="0.9"/>
<rect x="446.50" y="371.30" width="2.50" height="4.30" fill="#fff8f0"/>
<path d="M431.00 370.95L434.00 373.45L431.00 375.95Z" fill="#000"/>
<text x="435.40" y="375.75" fill="#ff6206" stroke="#ff6206" stroke-width="0.3" font-size="6.4" text-anchor="start" font-weight="bold" textLength="11.20" lengthAdjust="spacingAndGlyphs">DBL</text>
<rect x="428.60" y="123.00" width="23.70" height="11.30" fill="#e2e2ff" stroke="#1c1cff" stroke-width="1"/>
<rect x="430.50" y="125.00" width="19.90" height="7.30" rx="0.9" fill="#9a9aff" stroke="#1c1cff" stroke-width="0.9"/>
<rect x="436.70" y="126.00" width="12.10" height="5.30" fill="#fff"/>
<path d="M431.00 126.15L434.00 128.65L431.00 131.15Z" fill="#000"/>
<text x="437.10" y="130.85" fill="#2020ff" stroke="#2020ff" stroke-width="0.3" font-size="6.2" text-anchor="start" font-weight="bold" textLength="10.80" lengthAdjust="spacingAndGlyphs">U32</text>
<rect x="112.50" y="297.50" width="98.00" height="11.00" fill="#fff" stroke="#262626" stroke-width="0.95"/>
<text x="113.05" y="305.85" fill="#000" stroke="#000" stroke-width="0.16" font-size="9.2" text-anchor="start" textLength="96.30" lengthAdjust="spacingAndGlyphs">numberofdatapoints input</text>
<rect x="64.50" y="310.50" width="146.00" height="11.00" fill="#fff" stroke="#262626" stroke-width="0.95"/>
<text x="64.75" y="318.75" fill="#000" stroke="#000" stroke-width="0.16" font-size="9.2" text-anchor="start" textLength="144.60" lengthAdjust="spacingAndGlyphs">numberofdatapointsaftersetpoint input</text>
<rect x="145.50" y="324.50" width="65.00" height="11.00" fill="#fff" stroke="#262626" stroke-width="0.95"/>
<text x="146.25" y="333.25" fill="#000" stroke="#000" stroke-width="0.16" font-size="9.2" text-anchor="start" textLength="63.10" lengthAdjust="spacingAndGlyphs">data_index input</text>
<rect x="92.50" y="337.50" width="118.00" height="10.00" fill="#fff" stroke="#262626" stroke-width="0.95"/>
<text x="93.45" y="345.85" fill="#000" stroke="#000" stroke-width="0.16" font-size="9.2" text-anchor="start" textLength="115.90" lengthAdjust="spacingAndGlyphs">aod2_freq_current_value input</text>
<rect x="94.50" y="349.50" width="116.00" height="11.00" fill="#fff" stroke="#262626" stroke-width="0.95"/>
<text x="94.75" y="358.05" fill="#000" stroke="#000" stroke-width="0.16" font-size="9.2" text-anchor="start" textLength="114.60" lengthAdjust="spacingAndGlyphs">aod2_volt_current_value input</text>
<rect x="124.50" y="362.50" width="86.00" height="10.00" fill="#fff" stroke="#262626" stroke-width="0.95"/>
<text x="125.45" y="370.85" fill="#000" stroke="#000" stroke-width="0.16" font-size="9.2" text-anchor="start" textLength="83.90" lengthAdjust="spacingAndGlyphs">process_variable input</text>
<rect x="457.50" y="306.50" width="103.00" height="11.00" fill="#fff" stroke="#262626" stroke-width="0.95"/>
<text x="457.75" y="315.70" fill="#000" stroke="#000" stroke-width="0.16" font-size="9.2" text-anchor="start" textLength="101.20" lengthAdjust="spacingAndGlyphs">numberofdatapoints ouput</text>
<rect x="457.50" y="317.50" width="152.00" height="11.00" fill="#fff" stroke="#262626" stroke-width="0.95"/>
<text x="457.75" y="326.75" fill="#000" stroke="#000" stroke-width="0.16" font-size="9.2" text-anchor="start" textLength="150.50" lengthAdjust="spacingAndGlyphs">numberofdatapointsaftersetpoint output</text>
<rect x="457.50" y="331.50" width="71.00" height="10.00" fill="#fff" stroke="#262626" stroke-width="0.95"/>
<text x="457.75" y="339.50" fill="#000" stroke="#000" stroke-width="0.16" font-size="9.2" text-anchor="start" textLength="69.20" lengthAdjust="spacingAndGlyphs">data_index output</text>
<rect x="457.50" y="343.50" width="123.00" height="11.00" fill="#fff" stroke="#262626" stroke-width="0.95"/>
<text x="457.75" y="351.80" fill="#000" stroke="#000" stroke-width="0.16" font-size="9.2" text-anchor="start" textLength="121.20" lengthAdjust="spacingAndGlyphs">aod2_freq_current_value output</text>
<rect x="457.50" y="356.50" width="122.00" height="10.00" fill="#fff" stroke="#262626" stroke-width="0.95"/>
<text x="457.75" y="364.40" fill="#000" stroke="#000" stroke-width="0.16" font-size="9.2" text-anchor="start" textLength="120.50" lengthAdjust="spacingAndGlyphs">aod2_volt_current_value output</text>
<rect x="457.50" y="368.50" width="91.00" height="10.00" fill="#fff" stroke="#262626" stroke-width="0.95"/>
<text x="457.75" y="376.80" fill="#000" stroke="#000" stroke-width="0.16" font-size="9.2" text-anchor="start" textLength="90.00" lengthAdjust="spacingAndGlyphs">process_variable output</text>
<rect x="297.50" y="110.50" width="60.00" height="21.00" fill="#fff" stroke="#262626" stroke-width="0.95"/>
<text x="297.65" y="118.95" fill="#000" stroke="#000" stroke-width="0.16" font-size="9.2" text-anchor="start" textLength="59.15" lengthAdjust="spacingAndGlyphs">stop_condition_</text>
<text x="297.65" y="128.65" fill="#000" stroke="#000" stroke-width="0.16" font-size="9.2" text-anchor="start" textLength="30.51" lengthAdjust="spacingAndGlyphs">reached</text>
<rect x="428.50" y="111.50" width="50.00" height="10.00" fill="#fff" stroke="#262626" stroke-width="0.95"/>
<text x="428.55" y="120.05" fill="#000" stroke="#000" stroke-width="0.16" font-size="9.2" text-anchor="start" textLength="48.50" lengthAdjust="spacingAndGlyphs">Return Value</text>
<rect x="562.50" y="207.50" width="182.00" height="11.00" fill="#fff" stroke="#262626" stroke-width="0.95"/>
<text x="562.85" y="216.55" fill="#000" stroke="#000" stroke-width="0.16" font-size="9.2" text-anchor="start" textLength="180.50" lengthAdjust="spacingAndGlyphs">stop_condition_reached Function Output Cluster</text>
</svg>
</body>
</html>
